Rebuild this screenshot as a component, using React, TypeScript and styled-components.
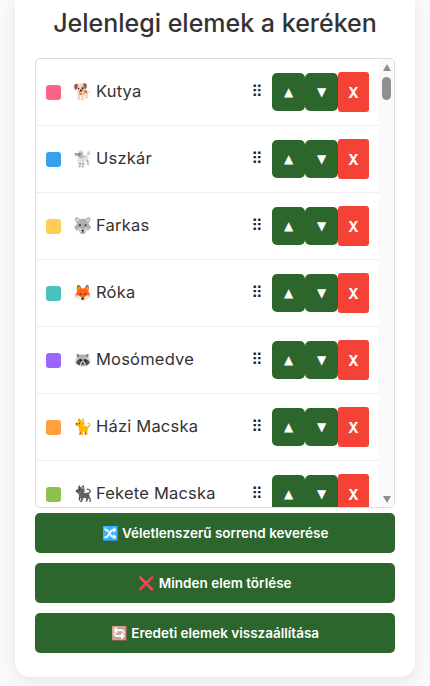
import * as React from "react";
import styled, { createGlobalStyle } from "styled-components";

type Animal = {
    color: string,
    emoji: string,
    name: string
}

const animals: Animal[] = [
    { color: "#ff6384", emoji: "🐕", name: "Kutya" },
    { color: "#36a2eb", emoji: "🐩", name: "Uszkár" },
    { color: "#ffce56", emoji: "🐺", name: "Farkas" },
    { color: "#4bc0c0", emoji: "🦊", name: "Róka" },
    { color: "#9966ff", emoji: "🦝", name: "Mosómedve" },
    { color: "#ff9f40", emoji: "🐈", name: "Házi Macska" },
    { color: "#8bc34a", emoji: "🐈‍⬛", name: "Fekete Macska" },
];

const GlobalStyle = createGlobalStyle`
    html, body {
        margin: 0;
        height: 100%;
        overflow: hidden;
        background: #f9f9f9;
    }
    body {
        font-family: Inter, "Noto Sans", sans-serif;
        color: #333;
    }
`;

const Page = styled.div`
    padding: 0 15px;
    box-sizing: border-box;
    width: 430px;
`;

const Card = styled.main`
    background: #fff;
    border-radius: 0 0 15px 15px;
    box-shadow: 0 4px 15px rgba(0,0,0,.08);
    padding: 0 20px 24px;
    height: 677px;
    box-sizing: border-box;
    display: flex;
    flex-direction: column;
`;

const Title = styled.h2`
    margin: 0;
    height: 58px;
    padding-top: 6px;
    box-sizing: border-box;
    text-align: center;
    font-size: 25px;
    line-height: 34px;
    font-weight: 500;
    color: #333;
    white-space: nowrap;
`;

const ListFrame = styled.div`
    display: flex;
    height: 450px;
    box-sizing: border-box;
    flex-shrink: 0;
    overflow: hidden;
    border: 1px solid #ddd;
    border-radius: 5px;
`;

const List = styled.ul`
    flex: 1;
    min-width: 0;
    list-style: none;
    margin: 0;
    padding: 0;
    overflow: hidden;
`;

const ScrollTrack = styled.div`
    width: 15px;
    flex-shrink: 0;
    display: flex;
    flex-direction: column;
    align-items: center;
    background: #fafafa;
`;

const ScrollArrow = styled.span<{ $down?: boolean }>`
    width: 0;
    height: 0;
    border-left: 4.5px solid transparent;
    border-right: 4.5px solid transparent;
    ${props => props.$down
        ? "border-top: 7px solid #8f8f8f; margin-top: auto; margin-bottom: 4px;"
        : "border-bottom: 7px solid #8f8f8f; margin-top: 5px;"}
`;

const ScrollThumb = styled.span`
    width: 9px;
    height: 23px;
    margin-top: 6px;
    border-radius: 5px;
    background: #8f8f8f;
`;

const Row = styled.li`
    display: flex;
    align-items: center;
    height: 67px;
    box-sizing: border-box;
    padding: 0 10px;
    border-bottom: 1px solid #eee;
`;

const Swatch = styled.span<{ $color: string }>`
    width: 15px;
    height: 15px;
    border-radius: 3px;
    margin-right: 12px;
    flex-shrink: 0;
    background: ${props => props.$color};
`;

const Label = styled.span`
    flex: 1;
    display: flex;
    align-items: center;
    gap: 4px;
    margin-top: -2px;
    font-size: 16.5px;
    letter-spacing: .2px;
    color: #333;
    white-space: nowrap;
`;

const Emoji = styled.span`
    font-size: 15.5px;
    letter-spacing: 0;
`;

const Handle = styled.span`
    width: 10px;
    margin-right: 11px;
    font-family: "DejaVu Sans", sans-serif;
    font-size: 16px;
    line-height: 1;
    color: #222;
    text-align: center;
`;

const Arrow = styled.button`
    width: 33px;
    height: 38px;
    flex-shrink: 0;
    padding: 0;
    border: none;
    border-radius: 5px;
    background: #2c662d;
    color: #fff;
    font-family: "DejaVu Sans", sans-serif;
    font-size: 12px;
`;

const Remove = styled.button`
    width: 31px;
    height: 40px;
    flex-shrink: 0;
    padding: 0;
    border: none;
    border-radius: 3px;
    background: #f44336;
    color: #fff;
    font-family: Inter, sans-serif;
    font-weight: 700;
    font-size: 14px;
`;

const Actions = styled.div`
    display: flex;
    flex-direction: column;
    gap: 10px;
    margin-top: 5px;
`;

const Action = styled.button`
    height: 40px;
    border: none;
    border-radius: 5px;
    background: #2c662d;
    color: #fff;
    font-family: Inter, sans-serif;
    font-weight: 600;
    font-size: 13.5px;
`;

const ActionIcon = styled.span<{ $hue?: number }>`
    filter: hue-rotate(${props => props.$hue ?? 0}deg);
`;

export default function App() {
    return (
        <Page>
            <GlobalStyle />
            <Card>
                <Title>Jelenlegi elemek a keréken</Title>
                <ListFrame>
                    <List>
                        {animals.map(a => (
                            <Row key={a.name}>
                                <Swatch $color={a.color} />
                                <Label><Emoji>{a.emoji}</Emoji>{a.name}</Label>
                                <Handle>⠿</Handle>
                                <Arrow>▲</Arrow>
                                <Arrow>▼</Arrow>
                                <Remove>X</Remove>
                            </Row>
                        ))}
                    </List>
                    <ScrollTrack>
                        <ScrollArrow />
                        <ScrollThumb />
                        <ScrollArrow $down />
                    </ScrollTrack>
                </ListFrame>
                <Actions>
                    <Action><ActionIcon $hue={175}>🔀</ActionIcon> Véletlenszerű sorrend keverése</Action>
                    <Action><ActionIcon $hue={-10}>❌</ActionIcon> Minden elem törlése</Action>
                    <Action><ActionIcon $hue={175}>🔄</ActionIcon> Eredeti elemek visszaállítása</Action>
                </Actions>
            </Card>
        </Page>
    )
}
